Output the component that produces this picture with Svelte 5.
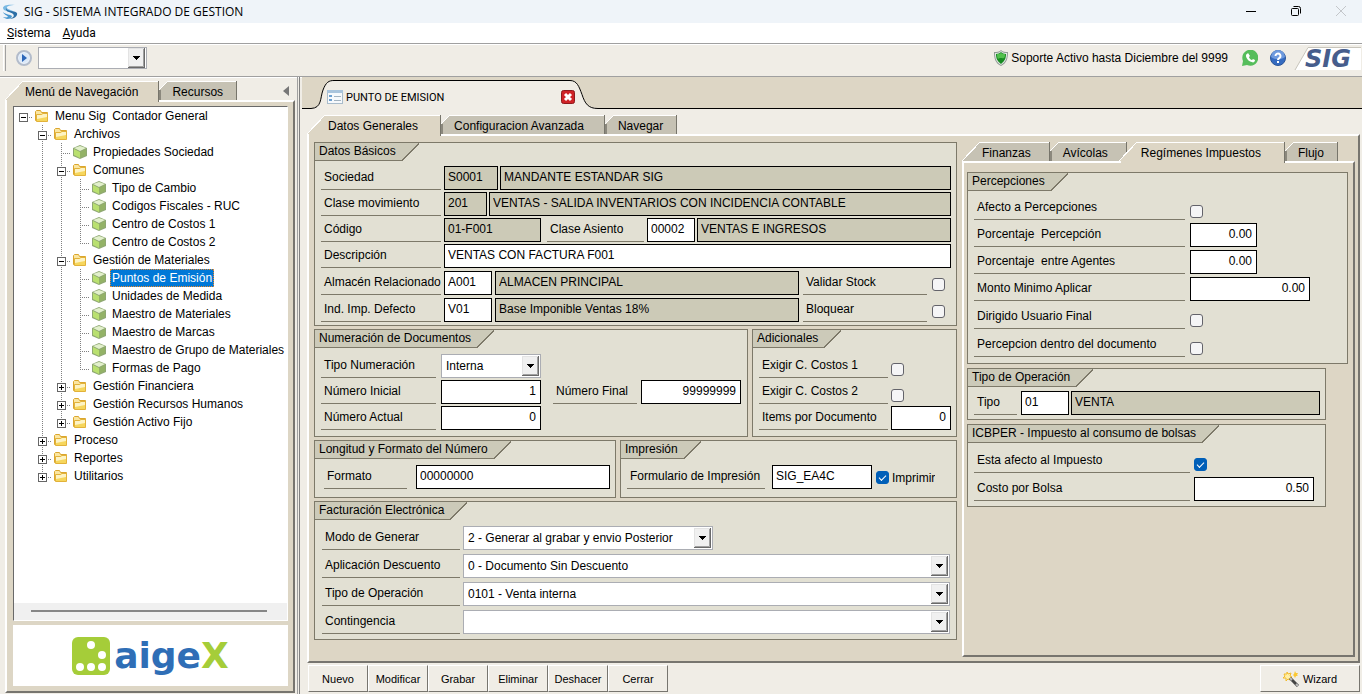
<script>
  let comando = ""
  let seleccionado = "Puntos de Emisión"
  let pestana = "Datos Generales"
  let impuesto = "Regímenes Impuestos"

  let validarStock = false
  let bloquear = false
  let imprimir = true
  let afectoBolsa = true

  // guides: one letter per column of the tree
  // r = root, v = vertical line, t = branch, l = last branch, s = space
  const nodes = [
    { text: "Menu Sig  Contador General", guides: "r", open: true },
    { text: "Archivos", guides: "st", open: true },
    { text: "Propiedades Sociedad", guides: "svt", leaf: true },
    { text: "Comunes", guides: "svt", open: true },
    { text: "Tipo de Cambio", guides: "svvt", leaf: true },
    { text: "Codigos Fiscales - RUC", guides: "svvt", leaf: true },
    { text: "Centro de Costos 1", guides: "svvt", leaf: true },
    { text: "Centro de Costos 2", guides: "svvl", leaf: true },
    { text: "Gestión de Materiales", guides: "svt", open: true },
    { text: "Puntos de Emisión", guides: "svvt", leaf: true },
    { text: "Unidades de Medida", guides: "svvt", leaf: true },
    { text: "Maestro de Materiales", guides: "svvt", leaf: true },
    { text: "Maestro de Marcas", guides: "svvt", leaf: true },
    { text: "Maestro de Grupo de Materiales", guides: "svvt", leaf: true },
    { text: "Formas de Pago", guides: "svvl", leaf: true },
    { text: "Gestión Financiera", guides: "svt" },
    { text: "Gestión Recursos Humanos", guides: "svt" },
    { text: "Gestión Activo Fijo", guides: "svl" },
    { text: "Proceso", guides: "st" },
    { text: "Reportes", guides: "st" },
    { text: "Utilitarios", guides: "sl" }
  ]

  const acciones = ["Nuevo", "Modificar", "Grabar", "Eliminar", "Deshacer", "Cerrar"]
</script>

{#snippet arrow()}
  <svg class="arrow" width="17" height="20" viewBox="0 0 17 20" aria-hidden="true">
    <rect width="17" height="20" fill="#696969" />
    <rect width="16" height="19" fill="#e3e3e3" />
    <path d="M1 18.500H15.500V1" fill="none" stroke="#a0a0a0" />
    <rect x="1" y="1" width="14" height="17" fill="#f0f0f0" />
    <path d="M5 8h7v1h-1v1h-1v1h-1v1h-1v-1h-1v-1h-1v-1h-1z" fill="#000" />
  </svg>
{/snippet}

{#snippet tab(name, active, pick)}
  <button class="tab" class:active role="tab" aria-selected={active} on:click={pick}>{name}</button>
{/snippet}

<div class="window">
  <header class="titlebar">
    <svg width="16" height="16" viewBox="0 0 16 16" aria-hidden="true">
      <path d="M13 1C7 0 1 1 1 4c0 4 9 3 11 6 1-4-6-4-7-6-1-2 4-3 8-3z" fill="#79b9e3" />
      <path d="M4 4c1 4 8 2 11 5 1 3-3 6-8 6 4-1 6-3 4-5C9 8 3 8 4 4z" fill="#2c6fa6" />
      <path d="M1 8c3 3 7 2 9 4 0 2-2 3-5 3-2-1-3-1-4-2 1 0 3 1 5 0-1-2-4-2-5-5z" fill="#4b98cf" />
    </svg>
    <span class="app-name">SIG - SISTEMA INTEGRADO DE GESTION</span>
    <div class="window-buttons">
      <button aria-label="Minimizar"><svg width="12" height="12" viewBox="0 0 12 12"><path d="M1 6.500h10" stroke="#000" /></svg></button>
      <button aria-label="Restaurar"><svg width="12" height="12" viewBox="0 0 12 12" fill="none" stroke="#000"><rect x="1.500" y="3.500" width="7" height="7" rx="1" /><path d="M3.500 1.500h5a2 2 0 0 1 2 2v5" /></svg></button>
      <button aria-label="Cerrar ventana"><svg width="12" height="12" viewBox="0 0 12 12" stroke="#c3c6ca"><path d="M1 1l10 10M11 1L1 11" /></svg></button>
    </div>
  </header>

  <nav class="menubar">
    <a href="#sistema"><u>S</u>istema</a>
    <a href="#ayuda"><u>A</u>yuda</a>
  </nav>

  <div class="toolbar">
    <span class="grip"></span>
    <button class="plain" aria-label="Ejecutar">
      <svg width="18" height="18" viewBox="0 0 18 18">
        <circle cx="9" cy="9" r="7" fill="#e9f1fb" stroke="#b3bccb" stroke-width="2" />
        <circle cx="9" cy="9" r="5" fill="#dce9f8" />
        <path d="M7 5l5 4-5 4z" fill="#2c66b8" />
      </svg>
    </button>
    <span class="combo command">
      <select aria-label="Comando" bind:value={comando}><option value=""></option></select>
      {@render arrow()}
    </span>
    <span class="support">
      <svg width="14" height="16" viewBox="0 0 14 16" aria-hidden="true">
        <path d="M7 0c2 2 4 2 7 2 0 6-1 11-7 14C1 13 0 8 0 2c3 0 5 0 7-2z" fill="#8f9b94" />
        <path d="M7 1c2 2 4 2 6 2 0 5-1 9-6 12C2 12 1 8 1 3c2 0 4 0 6-2z" fill="#e6ebe7" />
        <path d="M7 2c1 1 3 2 5 2 0 4-1 7-5 10-4-3-5-6-5-10 2 0 4-1 5-2z" fill="#178a22" />
        <path d="M7 3c1 1 3 1 4 1 0 2 0 3-1 4-2 1-4-1-6 1-1-2-1-3-1-5 1 0 3 0 4-1z" fill="#52c04d" />
      </svg>
      Soporte Activo hasta Diciembre del 9999
    </span>
    <button class="plain whatsapp" aria-label="WhatsApp">
      <svg width="16" height="16" viewBox="0 0 16 16">
        <path d="M0 16l1-5a8 8 0 1 1 4 4z" fill="#56bd5b" />
        <path d="M5 4l1-1 2 3-1 1c0 1 2 3 3 3l1-1 2 1c0 2-2 3-3 2C7 12 4 8 4 6c0-1 0-2 1-2z" fill="#fff" />
      </svg>
    </button>
    <button class="plain help" aria-label="Ayuda">
      <svg width="16" height="16" viewBox="0 0 16 16">
        <circle cx="8" cy="8" r="7.500" fill="#356bc0" stroke="#2c5698" />
        <path d="M1 7a7 7 0 0 1 14 0c-4 3-10 3-14 0z" fill="#6e9ade" />
        <path d="M5.500 6a2.500 2.500 0 1 1 4 2C8.500 8.500 8 9 8 10" fill="none" stroke="#fff" stroke-width="2" />
        <rect x="7" y="11" width="2" height="2" fill="#fff" />
      </svg>
    </button>
    <svg class="sig-logo" width="66" height="23" viewBox="0 0 66 23">
      <path d="M13 0H66V23H0z" fill="#fff" />
      <path d="M0 23L13 0.500H66" fill="none" stroke="#c8c5bb" />
      <text x="10" y="20" class="sig-text">SIG</text>
    </svg>
  </div>

  <div class="workspace">
    <aside>
      <div class="side-head">
        <div class="tabs" role="tablist">
          {@render tab("Menú de Navegación", true)}
          {@render tab("Recursos", false)}
        </div>
        <button class="plain" aria-label="Ocultar panel">
          <svg width="6" height="10" viewBox="0 0 6 10"><path d="M6 0v10L0 5z" fill="#777" /></svg>
        </button>
      </div>
      <div class="panel side">
        <div class="tree-box">
          <ul>
            {#each nodes as node}
              <li>
                {#each node.guides as g, i}
                  <span class="guide {g}">
                    {#if i === node.guides.length - 1 && !node.leaf}
                      <svg width="9" height="9" viewBox="0 0 9 9" stroke="#000">
                        <rect x="0.500" y="0.500" width="8" height="8" fill="#fff" stroke="#666" />
                        <path d="M2 4.500h5" />
                        {#if !node.open}<path d="M4.500 2v5" />{/if}
                      </svg>
                    {/if}
                  </span>
                {/each}
                {#if node.leaf}
                  <svg class="icon" width="16" height="14" viewBox="0 0 16 14" aria-hidden="true">
                    <path d="M8 0l7 3v8l-7 3-7-3V3z" fill="#8fa873" />
                    <path d="M8 1l6 2-6 3-6-3z" fill="#e2f0cb" />
                    <path d="M2 4l6 3v6l-6-3z" fill="#b9e06f" />
                    <path d="M14 4L8 7v6l6-3z" fill="#93b266" />
                  </svg>
                {:else}
                  <svg class="icon" width="16" height="14" viewBox="0 0 16 14" aria-hidden="true">
                    <path d="M1.500 11.500v-9l1-1h4l1 2h6v8z" fill="#fbe6a0" stroke="#dba62e" />
                    <path d="M2.500 12.500v-7h5l1-1h5v8z" fill="#f6d65c" stroke="#e2b23a" />
                    <path d="M3 6h5l1-1h4v3l-10 2z" fill="#fdf3c4" />
                  </svg>
                {/if}
                <button class="node" class:selected={seleccionado === node.text} on:click={() => (seleccionado = node.text)}>{node.text}</button>
              </li>
            {/each}
          </ul>
          <div class="scroll"><span></span></div>
        </div>
        <div class="brand">
          <svg width="38" height="38" viewBox="0 0 38 38" aria-hidden="true">
            <rect width="38" height="38" rx="6" fill="#a5cd39" />
            <g fill="#fff">
              <circle cx="19" cy="8" r="4" />
              <circle cx="30" cy="18" r="4" />
              <circle cx="8" cy="30" r="4" />
              <circle cx="19" cy="30" r="4" />
              <circle cx="30" cy="30" r="4" />
            </g>
          </svg>
          <span class="brand-name">aige<b>X</b></span>
        </div>
      </div>
    </aside>
    <div class="splitter"></div>

    <main>
      <div class="doc-tabs">
        <svg width="32" height="32" viewBox="0 0 32 32" aria-hidden="true">
          <path d="M0 32v-1h9C20 31 18 21 21 13 24 5 27 3 32 3v29z" fill="#f0ede6" />
          <path d="M0 31.500h9C20 31 18 21 21 13 24 5 27 3.500 32 3.500" fill="none" stroke="#000" />
        </svg>
        <div class="doc-tab">
          <svg class="doc-icon" width="16" height="14" viewBox="0 0 16 14" aria-hidden="true">
            <rect x="0.500" y="0.500" width="15" height="13" fill="#f6f9fc" stroke="#a9bccb" />
            <rect width="16" height="3" fill="#a9c4dc" />
            <path d="M2 6h3M2 10h3" stroke="#6da0d0" stroke-width="2" />
            <path d="M7 6.500h7M7 10.500h7" stroke="#a3b3c0" />
          </svg>
          <span>PUNTO DE EMISION</span>
          <button class="plain" aria-label="Cerrar pestaña">
            <svg width="14" height="14" viewBox="0 0 14 14">
              <rect x="0.500" y="0.500" width="13" height="13" rx="2" fill="#cf2226" stroke="#8e1a1d" />
              <path d="M4 4l6 6M10 4l-6 6" stroke="#fff" stroke-width="3" />
            </svg>
          </button>
        </div>
        <svg width="28" height="32" viewBox="0 0 28 32" aria-hidden="true">
          <path d="M0 3c7 0 9 6 12 14 3 10 6 14 16 14v1H0z" fill="#f0ede6" />
          <path d="M0 3.500c7 0 9 6 12 14 3 9 6 14 16 14" fill="none" stroke="#000" />
        </svg>
        <div class="doc-rest"></div>
      </div>

      <div class="sheet">
        <div class="tabs main-tabs" role="tablist">
          {#each ["Datos Generales", "Configuracion Avanzada", "Navegar"] as name}
            {@render tab(name, pestana === name, () => (pestana = name))}
          {/each}
        </div>
        <div class="panel columns">
          <div class="left">
            <section class="group basic">
              <h2>Datos Básicos</h2>
              <div class="row">
                <label for="sociedad">Sociedad</label>
                <input id="sociedad" class="w54" value="S0001" readonly />
                <input class="fill" aria-label="Nombre sociedad" value="MANDANTE ESTANDAR SIG" readonly />
              </div>
              <div class="row">
                <label for="clase">Clase movimiento</label>
                <input id="clase" class="w43" value="201" readonly />
                <input class="fill" aria-label="Nombre clase" value="VENTAS - SALIDA INVENTARIOS CON INCIDENCIA CONTABLE" readonly />
              </div>
              <div class="row">
                <label for="codigo">Código</label>
                <input id="codigo" class="w97" value="01-F001" readonly />
                <label class="second" for="asiento">Clase Asiento</label>
                <input id="asiento" class="w48" value="00002" />
                <input class="fill" aria-label="Nombre asiento" value="VENTAS E INGRESOS" readonly />
              </div>
              <div class="row">
                <label for="descripcion">Descripción</label>
                <input id="descripcion" class="fill" value="VENTAS CON FACTURA F001" />
              </div>
              <div class="row wide">
                <label for="almacen">Almacén Relacionado</label>
                <input id="almacen" class="w48" value="A001" />
                <input class="fill" aria-label="Nombre almacén" value="ALMACEN PRINCIPAL" readonly />
                <label class="check-label" for="stock">Validar Stock</label>
                <input id="stock" type="checkbox" bind:checked={validarStock} />
              </div>
              <div class="row wide">
                <label for="impuesto">Ind. Imp. Defecto</label>
                <input id="impuesto" class="w48" value="V01" />
                <input class="fill" aria-label="Nombre impuesto" value="Base Imponible Ventas 18%" readonly />
                <label class="check-label" for="bloquear">Bloquear</label>
                <input id="bloquear" type="checkbox" bind:checked={bloquear} />
              </div>
            </section>

            <div class="pair">
              <section class="group numbering">
                <h2>Numeración de Documentos</h2>
                <div class="row">
                  <label for="numeracion">Tipo Numeración</label>
                  <span class="combo w100"><select id="numeracion"><option>Interna</option></select>{@render arrow()}</span>
                </div>
                <div class="row">
                  <label for="inicial">Número Inicial</label>
                  <input id="inicial" class="w100 num" value="1" />
                  <label class="final" for="final">Número Final</label>
                  <input id="final" class="w100 num" value="99999999" />
                </div>
                <div class="row">
                  <label for="actual">Número Actual</label>
                  <input id="actual" class="w100 num" value="0" />
                </div>
              </section>
              <section class="group extras">
                <h2>Adicionales</h2>
                <div class="row">
                  <label for="costos1">Exigir C. Costos 1</label>
                  <input id="costos1" type="checkbox" />
                </div>
                <div class="row">
                  <label for="costos2">Exigir C. Costos 2</label>
                  <input id="costos2" type="checkbox" />
                </div>
                <div class="row">
                  <label for="items">Items por Documento</label>
                  <input id="items" class="fill num" value="0" />
                </div>
              </section>
            </div>

            <div class="pair output">
              <section class="group format">
                <h2>Longitud y Formato del Número</h2>
                <div class="row">
                  <label for="formato">Formato</label>
                  <input id="formato" class="fill" value="00000000" />
                </div>
              </section>
              <section class="group print">
                <h2>Impresión</h2>
                <div class="row">
                  <label for="formulario">Formulario de Impresión</label>
                  <input id="formulario" class="w100" value="SIG_EA4C" />
                  <label class="inline"><input type="checkbox" bind:checked={imprimir} />Imprimir</label>
                </div>
              </section>
            </div>

            <section class="group invoice">
              <h2>Facturación Electrónica</h2>
              <div class="row">
                <label for="modo">Modo de Generar</label>
                <span class="combo w250"><select id="modo"><option>2 - Generar al grabar y envio Posterior</option></select>{@render arrow()}</span>
              </div>
              <div class="row">
                <label for="descuento">Aplicación Descuento</label>
                <span class="combo fill"><select id="descuento"><option>0 - Documento Sin Descuento</option></select>{@render arrow()}</span>
              </div>
              <div class="row">
                <label for="operacion">Tipo de Operación</label>
                <span class="combo fill"><select id="operacion"><option>0101 - Venta interna</option></select>{@render arrow()}</span>
              </div>
              <div class="row">
                <label for="contingencia">Contingencia</label>
                <span class="combo fill"><select id="contingencia"><option></option></select>{@render arrow()}</span>
              </div>
            </section>
          </div>

          <div class="right">
            <div class="tabs tax-tabs" role="tablist">
              {#each ["Finanzas", "Avícolas", "Regímenes Impuestos", "Flujo"] as name}
                {@render tab(name, impuesto === name, () => (impuesto = name))}
              {/each}
            </div>
            <div class="panel taxes">
              <section class="group perceptions">
                <h2>Percepciones</h2>
                <div class="row">
                  <label for="afecto">Afecto a Percepciones</label>
                  <input id="afecto" type="checkbox" />
                </div>
                <div class="row">
                  <label for="porcentaje">Porcentaje&nbsp; Percepción</label>
                  <input id="porcentaje" class="w67 num" value="0.00" />
                </div>
                <div class="row">
                  <label for="agentes">Porcentaje&nbsp; entre Agentes</label>
                  <input id="agentes" class="w67 num" value="0.00" />
                </div>
                <div class="row">
                  <label for="monto">Monto Minimo Aplicar</label>
                  <input id="monto" class="w120 num" value="0.00" />
                </div>
                <div class="row loose">
                  <label for="dirigido">Dirigido Usuario Final</label>
                  <input id="dirigido" type="checkbox" />
                </div>
                <div class="row loose">
                  <label for="dentro">Percepcion dentro del documento</label>
                  <input id="dentro" type="checkbox" />
                </div>
              </section>
              <section class="group operation">
                <h2>Tipo de Operación</h2>
                <div class="row">
                  <label for="tipo">Tipo</label>
                  <input id="tipo" class="w48" value="01" />
                  <input class="fill" aria-label="Nombre tipo" value="VENTA" readonly />
                </div>
              </section>
              <section class="group bags">
                <h2>ICBPER - Impuesto al consumo de bolsas</h2>
                <div class="row">
                  <label for="bolsa">Esta afecto al Impuesto</label>
                  <input id="bolsa" type="checkbox" bind:checked={afectoBolsa} />
                </div>
                <div class="row">
                  <label for="costo">Costo por Bolsa</label>
                  <input id="costo" class="w120 num" value="0.50" />
                </div>
              </section>
            </div>
          </div>
        </div>
      </div>

      <footer>
        {#each acciones as accion}
          <button>{accion}</button>
        {/each}
        <button class="wizard">
          <svg width="17" height="16" viewBox="0 0 17 16" aria-hidden="true">
            <path d="M4 1l1 2 3-1-1 3 2 1-2 1 0 2-2-1-2 2 0-3-3 0 2-2-1-2 3 0z" fill="#fff0a8" stroke="#f2bb2c" />
            <path d="M12 0l1 2 2 0-1 2 1 1-2 0-1 2-1-2-1-1 1-1z" fill="#fbc832" />
            <path d="M7 7l8 8" stroke="#444" stroke-width="3" />
            <path d="M7 7l2 2M13 13l2 2" stroke="#bbb" stroke-width="2" />
          </svg>
          Wizard
        </button>
      </footer>
    </main>
  </div>
</div>

<style>
  :global(body) {
    background: #f0ede6;
  }
  .window {
    display: flex;
    flex-direction: column;
    min-height: 100vh;
    min-width: 1200px;
    background: #f0ede6;
    font-family: "Liberation Sans", Arial, sans-serif;
    font-size: 12px;
    color: #000;
  }
  .window *, .window *::after {
    box-sizing: border-box;
  }
  button, input, select {
    font: inherit;
    color: inherit;
    margin: 0;
  }
  svg {
    flex: none;
    display: block;
  }

  .titlebar {
    display: flex;
    align-items: center;
    height: 23px;
    padding: 0 11px 0 2px;
    gap: 6px;
    background: #eff4f9;
  }
  .app-name {
    font-family: "Open Sans", "Noto Sans", sans-serif;
  }
  .window-buttons {
    display: flex;
    margin-left: auto;
    gap: 25px;
    padding-bottom: 2px;
  }
  .window-buttons button, .plain {
    display: flex;
    padding: 0;
    border: 0;
    background: none;
  }
  .window-buttons button {
    padding: 0 4px;
  }
  .menubar {
    display: flex;
    gap: 12px;
    height: 20px;
    padding-left: 7px;
    background: #fff;
    font-family: Roboto, "Open Sans", sans-serif;
    line-height: 20px;
  }
  .menubar a {
    color: #000;
    text-decoration: none;
  }

  .toolbar {
    display: flex;
    align-items: center;
    height: 34px;
    padding: 0 1px 4px 3px;
    border-top: 1px solid #a0a0a0;
    border-bottom: 1px solid #a0a0a0;
    box-shadow: inset 0 1px #fff, 0 1px #fff;
  }
  .grip {
    width: 3px;
    height: 26px;
    margin-right: 9px;
    border-right: 1px solid #a0a0a0;
    border-left: 1px solid #fff;
  }
  .command {
    width: 109px;
    margin-left: 5px;
  }
  .toolbar .command select {
    height: 22px;
  }
  .support {
    display: flex;
    align-items: center;
    gap: 3px;
    margin-left: auto;
  }
  .whatsapp {
    margin-left: 14px;
  }
  .help {
    margin: 0 9px 0 12px;
  }
  .sig-logo {
    overflow: visible;
  }
  .sig-text {
    font: italic bold 24px "DejaVu Sans", sans-serif;
    fill: #465d8c;
  }

  .workspace {
    display: flex;
    flex: 1;
  }
  aside {
    display: flex;
    flex-direction: column;
    width: 290px;
    margin: 4px 2px 1px 5px;
  }
  .side-head {
    display: flex;
    justify-content: space-between;
    align-items: center;
    padding-right: 6px;
  }
  .splitter {
    width: 3px;
    margin-right: 2px;
    border-left: 1px solid #a0a0a0;
    border-right: 1px solid #808080;
  }

  .tabs {
    display: flex;
    height: 19px;
  }
  .tab {
    height: 19px;
    padding: 2px 13px 0;
    border: 0;
    white-space: nowrap;
    border-right: 1px solid #77756b;
    background:
      linear-gradient(to bottom right, transparent 46%, #fff 46% 54%, #c6c2b4 54%) 0 0 / 9px 9px no-repeat,
      linear-gradient(#fff, #fff) 9px 0 / 100% 1px no-repeat,
      linear-gradient(#8b887d, #8b887d) 0 9px / 2px 100% no-repeat,
      linear-gradient(#c6c2b4, #c6c2b4) 0 9px no-repeat,
      linear-gradient(#c6c2b4, #c6c2b4) 9px 0 no-repeat;
  }
  .tab:first-child, .tab.active {
    padding: 2px 20px 0;
    background:
      linear-gradient(to bottom right, transparent 48%, #fff 48% 52%, #c6c2b4 52%) 0 0 / 18px 19px no-repeat,
      linear-gradient(#fff, #fff) 18px 0 / 100% 1px no-repeat,
      linear-gradient(#c6c2b4, #c6c2b4) 18px 0 no-repeat;
  }
  /* the active tab runs over the edge of the panel below it */
  .tab.active {
    position: relative;
    height: 21px;
    padding-bottom: 2px;
    background:
      linear-gradient(to bottom right, transparent 48%, #fff 48% 52%, #ddd6c5 52%) 0 0 / 18px 19px no-repeat,
      linear-gradient(#fff, #fff) 18px 0 / 100% 1px no-repeat,
      linear-gradient(#ddd6c5, #ddd6c5) 2px 19px no-repeat,
      linear-gradient(#ddd6c5, #ddd6c5) 18px 0 no-repeat;
  }
  .tab.active:not(:first-child) {
    margin-left: -8px;
  }
  .main-tabs .tab:first-child {
    padding-left: 21px;
    padding-right: 22px;
  }
  .main-tabs .tab:nth-child(2) {
    padding-right: 20px;
  }
  .tax-tabs .tab:first-child, .tax-tabs .tab:nth-child(2) {
    padding-right: 18px;
  }
  .tax-tabs .tab:nth-child(3) {
    padding-left: 22px;
    padding-right: 23px;
  }
  .panel {
    flex: 1;
    background: #ddd6c5;
    border: 2px solid;
    border-color: #fff #77756f #77756f #fff;
  }

  .side {
    display: flex;
    flex-direction: column;
    padding: 4px 5px 5px 6px;
    gap: 4px;
  }
  .tree-box {
    display: flex;
    flex-direction: column;
    flex: 1;
    overflow: hidden;
    background: #fff;
    border: 1px solid;
    border-color: #696969 #fff #fff #696969;
  }
  ul {
    flex: 1;
    margin: 0;
    padding: 0;
    list-style: none;
  }
  li {
    display: flex;
    align-items: center;
    height: 18px;
  }
  .guide {
    display: flex;
    align-items: center;
    justify-content: center;
    flex: none;
    width: 19px;
    height: 18px;
    padding-top: 2px;
    background-repeat: no-repeat;
    --dots-x: repeating-linear-gradient(to right, #808080 0 1px, transparent 1px 2px);
    --dots-y: repeating-linear-gradient(#808080 0 1px, transparent 1px 2px);
  }
  .guide.v {
    background-image: var(--dots-y);
    background-position: 9px 0;
    background-size: 1px 18px;
  }
  .guide.r {
    background-image: var(--dots-x);
    background-position: 9px 10px;
    background-size: 10px 1px;
  }
  .guide.t {
    background-image: var(--dots-y), var(--dots-x);
    background-position: 9px 0, 9px 10px;
    background-size: 1px 18px, 10px 1px;
  }
  .guide.l {
    background-image: var(--dots-y), var(--dots-x);
    background-position: 9px 0, 9px 10px;
    background-size: 1px 10px, 10px 1px;
  }
  .icon {
    margin-left: 1px;
  }
  .node {
    height: 18px;
    margin-left: 3px;
    padding: 0 1px;
    border: 1px solid transparent;
    background: none;
    line-height: 16px;
    white-space: pre;
  }
  .node.selected {
    color: #fff;
    background: #0078d7;
    border: 1px dotted #f08a28;
  }
  .scroll {
    height: 17px;
    padding: 7px 20px 0 17px;
    background: #f0f0f0;
  }
  .scroll span {
    display: block;
    height: 2px;
    background: #868686;
  }
  .brand {
    display: flex;
    align-items: center;
    justify-content: center;
    gap: 4px;
    height: 61px;
    background: #fff;
  }
  .brand-name {
    font: bold 36px/36px "DejaVu Sans", sans-serif;
    color: #2f6eb6;
  }
  .brand-name b {
    color: #a5cd39;
  }

  main {
    display: flex;
    flex-direction: column;
    flex: 1;
    min-width: 0;
  }
  .doc-tabs {
    display: flex;
    height: 32px;
    background: #ddd6c5;
  }
  .doc-tab {
    display: flex;
    align-items: center;
    width: 236px;
    margin-top: 3px;
    padding: 4px 0 0;
    border-top: 1px solid #000;
    background: #f0ede6;
    font: 11px Roboto, "Liberation Sans", sans-serif;
  }
  .doc-icon {
    margin-left: -7px;
  }
  .doc-tab span {
    flex: 1;
    padding-left: 3px;
  }
  /* keeps the close button above the curve of the tab */
  .doc-tab button {
    position: relative;
    z-index: 1;
    margin-right: -5px;
  }
  .doc-rest {
    flex: 1;
    border-bottom: 1px solid #000;
  }
  .sheet {
    display: flex;
    flex-direction: column;
    flex: 1;
    padding: 6px 2px 2px 5px;
  }
  .columns {
    display: grid;
    grid-template-columns: minmax(0, 643fr) minmax(0, 393fr);
    gap: 5px;
    padding: 6px 3px 4px 5px;
  }
  .left {
    display: flex;
    flex-direction: column;
    gap: 3px;
  }
  .right {
    display: flex;
    flex-direction: column;
  }
  .taxes {
    display: flex;
    flex-direction: column;
    gap: 4px;
    padding: 9px 5px 9px 3px;
  }

  .group {
    padding: 0 5px 2px 6px;
    border: 1px solid #7d7969;
    background: #e2e0d3;
  }
  h2 {
    display: flex;
    width: max-content;
    height: 18px;
    margin: 0 0 5px -6px;
    font-size: 12px;
    font-weight: normal;
    line-height: 17px;
    padding: 0 23px 0 4px;
    background:
      linear-gradient(to bottom right, #cccab9 48%, #7d7969 48% 53%, transparent 53%) 100% 0 / 18px 18px no-repeat,
      linear-gradient(to right, #7d7969 calc(100% - 18px), transparent 0) 0 100% / 100% 1px no-repeat,
      linear-gradient(to right, #cccab9 calc(100% - 18px), transparent 0);
  }
  .row {
    display: flex;
    height: 24px;
    gap: 2px;
    margin-bottom: 2px;
  }
  .row label {
    flex: none;
    overflow: hidden;
    height: 24px;
    padding-left: 3px;
    border-bottom: 1px solid #7d7969;
    line-height: 22px;
    white-space: nowrap;
  }
  .row > label:first-child {
    width: 120px;
    margin-right: 1px;
  }
  input:not([type="checkbox"]) {
    min-width: 0;
    height: 24px;
    padding: 0 3px 2px;
    border: 1px solid #000;
    border-radius: 0;
    background: #fff;
  }
  input[readonly]:not([type="checkbox"]) {
    background: #cccab7;
  }
  input.num {
    padding-right: 4px;
    text-align: right;
  }
  input[type="checkbox"] {
    appearance: none;
    display: grid;
    place-items: center;
    flex: none;
    width: 13px;
    height: 13px;
    margin-top: 9px;
    border: 1px solid #63636a;
    border-radius: 3px;
    background: #f5f5f6;
  }
  input[type="checkbox"]:checked {
    border-color: #005fb8;
    background: #005fb8;
  }
  input[type="checkbox"]:checked::after {
    content: "";
    width: 7px;
    height: 4px;
    margin-bottom: 2px;
    border: solid #fff;
    border-width: 0 0 1px 1px;
    transform: rotate(-45deg);
  }
  .fill {
    flex: 1;
  }
  .w43 { width: 43px; }
  .w48 { width: 48px; }
  .w54 { width: 54px; }
  .w67 { width: 67px; }
  .w97 { width: 97px; }
  .w100 { width: 100px; }
  .w120 { width: 120px; }
  .w250 { width: 250px; }

  .combo {
    display: grid;
    align-items: center;
  }
  .combo select, .combo .arrow {
    grid-area: 1 / 1;
  }
  .combo select {
    appearance: none;
    width: 100%;
    height: 24px;
    padding: 0 20px 0 4px;
    border: 1px solid #abadb3;
    border-radius: 0;
    background: #fff;
  }
  .arrow {
    justify-self: end;
    margin-right: 2px;
    pointer-events: none;
  }

  .row .second {
    width: 97px;
    margin: 0 1px 0 4px;
  }
  .wide {
    gap: 3px;
    margin: 3px 0;
  }
  .wide > label:first-child {
    margin-right: 0;
  }
  .row .check-label {
    width: 124px;
    margin: 0 2px 0 1px;
  }
  .wide input[type="checkbox"] {
    margin-top: 7px;
    margin-right: 6px;
  }
  .basic {
    padding-bottom: 0;
  }

  .pair {
    display: grid;
    grid-template-columns: minmax(0, 434fr) minmax(0, 205fr);
    gap: 4px;
  }
  .output {
    grid-template-columns: minmax(0, 302fr) minmax(0, 337fr);
  }
  .numbering, .extras {
    padding-bottom: 4px;
  }
  .numbering h2, .extras h2, .format h2, .print h2, .invoice h2, .bags h2 {
    margin-bottom: 6px;
  }
  .numbering .row > label:first-child {
    width: 115px;
    margin-right: 3px;
  }
  .row .final {
    width: 84px;
    margin: 0 2px 0 10px;
  }
  .extras .row > label:first-child {
    width: 129px;
  }
  .format {
    padding: 0 5px 6px 9px;
  }
  .format h2 {
    margin-left: -9px;
  }
  .format .row > label:first-child {
    width: 83px;
    margin-right: 7px;
  }
  .print .row > label:first-child {
    width: 138px;
    margin-right: 5px;
  }
  .row .inline {
    display: flex;
    gap: 3px;
    padding-left: 2px;
    border: 0;
    line-height: 26px;
  }
  .row .inline input {
    margin-top: 6px;
  }
  .invoice {
    padding: 0 6px 1px 7px;
  }
  .invoice h2 {
    margin-left: -7px;
  }
  .invoice .row, .bags .row {
    margin-bottom: 4px;
  }
  .invoice .row > label:first-child {
    width: 138px;
  }

  .perceptions {
    padding-bottom: 3px;
  }
  .perceptions .row {
    margin-bottom: 3px;
  }
  .perceptions .loose {
    margin-top: 4px;
  }
  .perceptions .row > label:first-child {
    width: 211px;
    margin-right: 3px;
  }
  .operation, .bags {
    margin-right: 22px;
  }
  .operation h2 {
    margin-bottom: 4px;
  }
  .operation .row > label:first-child {
    width: 43px;
    margin-right: 2px;
  }
  .bags {
    padding-bottom: 1px;
  }
  .bags .row > label:first-child {
    width: 216px;
    margin-right: 2px;
  }

  footer {
    display: flex;
    height: 29px;
    padding: 0 2px 2px 6px;
  }
  footer button {
    display: flex;
    align-items: center;
    justify-content: center;
    width: 60px;
    padding: 0;
    border: 1px solid;
    border-color: #fff #77756f #77756f #fff;
    background: #f0ede6;
    font: 11px "Liberation Sans", Arial, sans-serif;
    white-space: nowrap;
  }
  footer .wizard {
    width: 100px;
    margin-left: auto;
    gap: 3px;
  }
</style>
